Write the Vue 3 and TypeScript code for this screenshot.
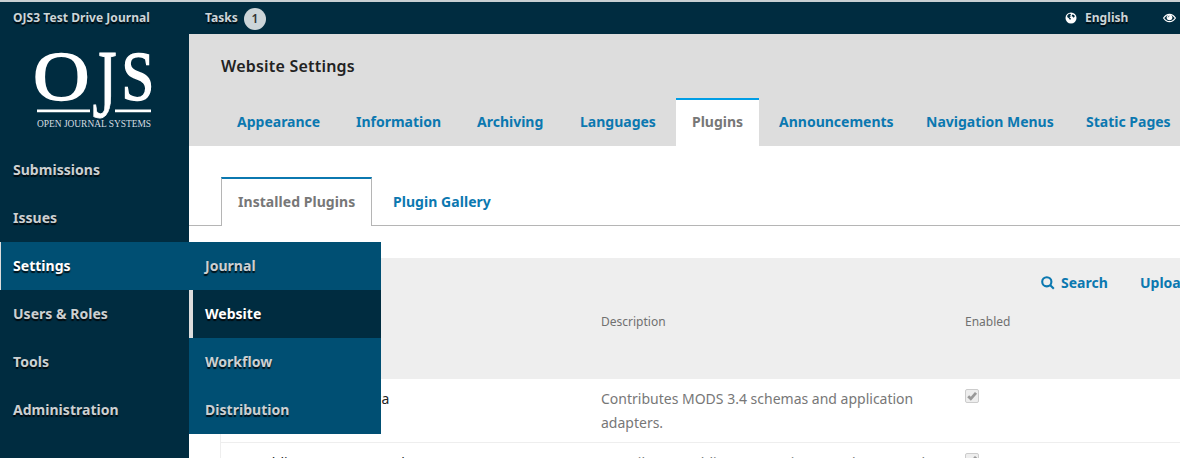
<script setup lang="ts">
interface NavItem { label: string; active?: boolean }
interface TabItem extends NavItem { w: number }
const nav: NavItem[] = [
  { label: 'Submissions' },
  { label: 'Issues' },
  { label: 'Settings', active: true },
  { label: 'Users & Roles' },
  { label: 'Tools' },
  { label: 'Administration' },
]
const submenu: NavItem[] = [
  { label: 'Journal' },
  { label: 'Website', active: true },
  { label: 'Workflow' },
  { label: 'Distribution' },
]
const tabs: TabItem[] = [
  { label: 'Appearance', w: 87 },
  { label: 'Information', w: 89 },
  { label: 'Archiving', w: 71 },
  { label: 'Languages', w: 79 },
  { label: 'Plugins', w: 51, active: true },
  { label: 'Announcements', w: 115 },
  { label: 'Navigation Menus', w: 128 },
  { label: 'Static Pages', w: 85 },
]
const rows = [
  { name: 'MODS 3.4 meta-data', description: 'Contributes MODS 3.4 schemas and application adapters.' },
  { name: 'Dublin Core 1.1 meta-data', description: 'Contributes Dublin Core version 1.1 schemas and application adapters.' },
]
</script>

<template>
  <div class="page">
    <header class="topbar">
      <span class="site">OJS3 Test Drive Journal</span>
      <span class="tasks">Tasks</span>
      <span class="badge">1</span>
      <svg class="globe" viewBox="0 0 12 12">
        <circle cx="6" cy="6" r="5.5" fill="#fff" />
        <path d="M2.4 3.2 4.2 1.8 6.2 2 5.2 3.4 5.8 4.4 4.4 5.2 6 6.4 5.4 7.8 4.6 7.6 3.8 6.2 2.2 5ZM7.2 2.6 9.2 3 9.8 4.8 8.4 5.8 7.6 4.6 6.6 4.2Z" fill="#002c40" />
      </svg>
      <span class="lang">English</span>
      <svg class="eye" viewBox="0 0 13 10">
        <path d="M.6 5Q3 1.3 6.5 1.3T12.4 5Q10 8.7 6.5 8.7T.6 5Z" fill="none" stroke="#fff" stroke-width="1.2" />
        <circle cx="6.5" cy="4.5" r="2.8" fill="#fff" />
        <path d="M5 4.4Q5 3 6.5 2.9" fill="none" stroke="#002c40" stroke-width=".6" />
      </svg>
    </header>
    <div class="body">
      <aside class="sidebar">
        <svg class="logo" viewBox="0 0 189 112">
          <g fill="#fff" stroke="#fff" font-family="Liberation Serif, serif">
            <text transform="translate(33.1 66.4) scale(1.12 1)" font-size="70" stroke-width="1.5">O</text>
            <text transform="translate(92.5 82.6) scale(.64 1)" font-size="97" stroke-width=".9">J</text>
            <text transform="translate(121.4 66.4) scale(.84 1)" font-size="70" stroke-width="1.5">S</text>
          </g>
          <text x="37" y="93" font-family="Liberation Serif, serif" font-size="9.5" textLength="114" lengthAdjust="spacingAndGlyphs" fill="#d5dde1">OPEN JOURNAL SYSTEMS</text>
          <path d="M37 76.9H90M115 76.9H151" stroke="#fff" stroke-width="2.6" />
        </svg>
        <nav>
          <a v-for="n in nav" :key="n.label" class="nav-item" :class="{ open: n.active }">{{ n.label }}</a>
        </nav>
        <div class="submenu">
          <a v-for="n in submenu" :key="n.label" class="sub-item" :class="{ current: n.active }">{{ n.label }}</a>
        </div>
      </aside>
      <main class="content">
        <div class="heading">
          <h1>Website Settings</h1>
          <div class="tabs">
            <a v-for="t in tabs" :key="t.label" class="tab" :class="{ selected: t.active }"><span :style="{ width: t.w + 'px' }">{{ t.label }}</span></a>
          </div>
        </div>
        <div class="subtabs">
          <a class="subtab selected">Installed Plugins</a>
          <a class="subtab">Plugin Gallery</a>
        </div>
        <section class="grid">
          <div class="grid-head">
            <div class="actions">
              <a class="search">
                <svg viewBox="0 0 14 14"><circle cx="5.8" cy="5.8" r="4.6" /><path d="M9.1 9.1 12.8 12.8" /></svg>
                <span>Search</span>
              </a>
              <a class="upload">Upload A New Plugin</a>
            </div>
            <div class="cols"><span class="c1"></span><span class="c2">Description</span><span>Enabled</span></div>
          </div>
          <div v-for="r in rows" :key="r.name" class="row">
            <span class="name">{{ r.name }}</span>
            <span class="desc">{{ r.description }}</span>
            <span class="check"><svg viewBox="0 0 14 14"><path d="M3.2 7.2 5.8 9.8 11 3.8" /></svg></span>
          </div>
        </section>
      </main>
    </div>
  </div>
</template>

<style>
body { margin: 0; overflow: hidden; }
</style>

<style scoped>
.page { width: 1180px; height: 458px; overflow: hidden; background: #fff; font: 14px/24px "Noto Sans", sans-serif; white-space: nowrap; }
.topbar { box-sizing: border-box; height: 34px; border-top: 2px solid #c9d0d3; background: #002c40; display: flex; align-items: center; padding-left: 13px; font-size: 12px; font-weight: 700; color: #ccd5d9; letter-spacing: .05px; text-shadow: 0 2px 1px rgba(0,0,0,.8); }
.site { width: 192px; }
.tasks { width: 39px; }
.badge { width: 22px; height: 22px; margin-top: 2px; line-height: 22px; border-radius: 50%; background: #ccd5d9; color: #333; text-align: center; text-shadow: none; font-weight: 600; }
.globe { width: 12px; height: 12px; margin-left: 799px; flex: none; }
.lang { width: 78px; margin-left: 8px; flex: none; }
.eye { width: 13px; height: 10px; flex: none; }
.body { display: flex; height: 424px; }
.sidebar { position: relative; width: 189px; flex: none; background: #002c40; z-index: 2; }
.logo { display: block; width: 189px; height: 112px; }
.nav-item, .sub-item { display: block; height: 48px; line-height: 48px; padding-left: 13px; font-weight: 700; letter-spacing: .03px; color: #ccd0d2; text-shadow: 0 2px 1px rgba(0,0,0,.8); }
.nav-item.open { color: #fff; background: #004f73; border-left: 1px solid #ddd; padding-left: 12px; }
.submenu { position: absolute; left: 189px; top: 208px; width: 192px; background: #004f73; }
.sub-item { padding-left: 16px; }
.sub-item.current { background: #002c40; color: #fff; border-left: 4px solid #ddd; padding-left: 12px; }
.content { width: 991px; min-width: 0; overflow: hidden; }
.heading { height: 112px; background: #ddd; display: flex; flex-direction: column; justify-content: space-between; }
h1 { margin: 20px 0 0 32px; font-size: 16px; line-height: 24px; font-weight: 600; letter-spacing: .21px; color: #222; }
.tabs { display: flex; padding-left: 32px; }
.tab { flex: none; height: 46px; line-height: 44px; border-top: 2px solid transparent; padding: 0 16px; color: #0b78b0; font-weight: 700; }
.tab span { display: block; }
.tab.selected { margin: 0 4px 0 1px; background: #fff; border-color: #009de5; color: #777; }
.subtabs { display: flex; margin-top: 31px; padding-left: 32px; height: 48px; border-bottom: 1px solid #b5b5b5; }
.subtab { box-sizing: border-box; height: 49px; line-height: 46px; border-top: 2px solid transparent; padding: 0 21px; color: #0b78b0; font-weight: 700; letter-spacing: .05px; }
.subtab.selected { width: 151px; padding: 0 16px; background: #fff; border: 1px solid #b5b5b5; border-top: 2px solid #0b78b0; border-bottom: 0; color: #777; }
.grid { margin: 32px 0 0 31px; border-left: 1px solid #eee; }
.grid-head { height: 121px; background: #eee; overflow: hidden; }
.actions { display: flex; margin-left: 820px; padding-top: 13px; color: #0b78b0; font-weight: 700; }
.search { display: flex; flex: none; width: 99px; align-items: center; gap: 6px; }
.search svg { width: 14px; height: 14px; fill: none; stroke: #0b78b0; stroke-width: 2.1; }
.upload { flex: none; }
.cols { display: flex; margin-top: 15px; font-size: 12px; line-height: 24px; color: #707070; font-weight: 400; }
.c1 { width: 380px; }
.c2 { width: 364px; }
.row { display: flex; height: 63px; border-bottom: 1px solid #eee; }
.name { box-sizing: border-box; width: 380px; padding: 8px 0 0 32px; color: #222; }
.row:nth-child(2) .name { letter-spacing: .5px; word-spacing: -4.2px; }
.desc { box-sizing: border-box; width: 364px; padding: 8px 32px 0 0; white-space: normal; color: #777; }
.check { box-sizing: border-box; width: 14px; height: 14px; margin-top: 10px; border: 1px solid #ccc; border-radius: 2px; background: #eee; }
.check svg { display: block; margin: -1px; width: 14px; height: 14px; fill: none; stroke: #999; stroke-width: 2.8; }
</style>
